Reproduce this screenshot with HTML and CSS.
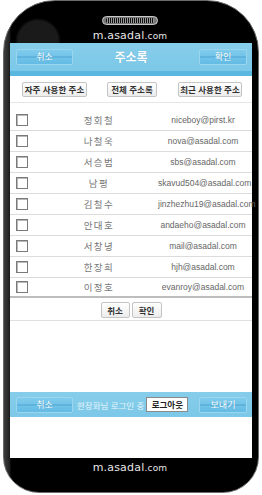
FILE: index.html
```html
<!DOCTYPE html>
<html lang="ko">
<head>
<meta charset="utf-8">
<title>주소록</title>
<link rel="stylesheet" href="styles.css">
</head>
<body>
<div class="phone">
  <div class="phone-top">
    <div class="speaker"><div class="grille"></div></div>
    <div class="brand">m.asadal<span class="dot">.com</span></div>
  </div>
  <div class="screen">
    <div class="bar header">
      <span class="bbtn bbtn-l">취소</span>
      <span class="title">주소록</span>
      <span class="bbtn bbtn-r">확인</span>
    </div>
    <div class="tabs">
      <span class="gbtn tab1">자주 사용한 주소</span>
      <span class="gbtn tab2">전체 주소록</span>
      <span class="gbtn tab3">최근 사용한 주소</span>
    </div>
    <div class="list">
      <div class="row"><span class="cb"></span><span class="name">정회철</span><span class="mail">niceboy@pirst.kr</span></div>
      <div class="row"><span class="cb"></span><span class="name">나철욱</span><span class="mail">nova@asadal.com</span></div>
      <div class="row"><span class="cb"></span><span class="name">서승범</span><span class="mail">sbs@asadal.com</span></div>
      <div class="row"><span class="cb"></span><span class="name">남평</span><span class="mail">skavud504@asadal.com</span></div>
      <div class="row"><span class="cb"></span><span class="name">김철수</span><span class="mail">jinzhezhu19@asadal.com</span></div>
      <div class="row"><span class="cb"></span><span class="name">안대호</span><span class="mail">andaeho@asadal.com</span></div>
      <div class="row"><span class="cb"></span><span class="name">서창녕</span><span class="mail">mail@asadal.com</span></div>
      <div class="row"><span class="cb"></span><span class="name">한장희</span><span class="mail">hjh@asadal.com</span></div>
      <div class="row last"><span class="cb"></span><span class="name">이정호</span><span class="mail">evanroy@asadal.com</span></div>
    </div>
    <div class="actions">
      <span class="gbtn act1">취소</span>
      <span class="gbtn act2">확인</span>
    </div>
    <div class="spacer"></div>
    <div class="bar footer">
      <span class="bbtn bbtn-l">취소</span>
      <span class="status">한장화님 로그인 중</span>
      <span class="logout">로그아웃</span>
      <span class="bbtn bbtn-r">보내기</span>
    </div>
    <div class="bottom-space"></div>
  </div>
  <div class="phone-bottom">
    <div class="brand">m.asadal<span class="dot">.com</span></div>
  </div>
</div>
</body>
</html>
```

FILE: styles.css
```css
html, body {
  margin: 0;
  padding: 0;
  background: #fff;
}
body {
  font-family: "Noto Sans CJK KR", "Noto Sans", sans-serif;
}
.phone {
  box-sizing: border-box;
  width: 256px;
  height: 493px;
  margin-left: 3px;
  border: 1px solid #6a6a6a;
  border-radius: 52px 52px 36px 36px;
  background:
    radial-gradient(circle at 34px 40px, rgba(255,255,255,0.10) 0 20px, rgba(255,255,255,0) 23px),
    linear-gradient(to right, #3c3c3c 0, #2a2a2a 4px, #1a1a1a 6px, #000 7px);
  display: flex;
  flex-direction: column;
  align-items: flex-start;
  overflow: hidden;
}
.phone-top {
  width: 100%;
  height: 42px;
  display: flex;
  flex-direction: column;
  align-items: center;
}
.speaker {
  margin-top: 15px;
  width: 56px;
  height: 9px;
  box-sizing: border-box;
  border: 1px solid #c8c8c8;
  border-radius: 5px;
  background: #777;
  padding: 1px 3px;
  margin-left: -2px;
}
.grille {
  height: 100%;
  background: repeating-linear-gradient(90deg, #111 0 1px, #999 1px 2px);
  border-radius: 2px;
}
.brand {
  margin-top: 4px;
  font-family: "DejaVu Sans", sans-serif;
  font-size: 11px;
  line-height: 13px;
  color: #e6e6e6;
  letter-spacing: 0.2px;
  margin-left: -2px;
}
.brand .dot {
  font-size: 9px;
}
.screen {
  width: 242px;
  height: 415px;
  margin-left: 6px;
  background: #fff;
  display: flex;
  flex-direction: column;
}
.bar {
  display: flex;
  align-items: center;
  background: linear-gradient(#86cdea, #7cc8e8);
  padding: 0 5px 0 6px;
}
.header {
  height: 28px;
  border-bottom: 5px solid #5ab8e0;
  position: relative;
}
.bbtn {
  box-sizing: border-box;
  height: 16px;
  border: 1px solid #9bd6ef;
  border-radius: 2px;
  background:
    linear-gradient(rgba(255,255,255,0) 0 6px, rgba(60,150,200,0.35) 6px 8px, rgba(255,255,255,0) 8px),
    linear-gradient(#7fcbec, #64bbe4);
  color: #fff;
  font-size: 9px;
  line-height: 14px;
  text-align: center;
  text-shadow: 0 0 1px #4a9fc8;
}
.bbtn-l { width: 57px; }
.bbtn-r { width: 48px; margin-left: auto; }
.title {
  position: absolute;
  left: 0;
  right: 0;
  top: 0;
  text-align: center;
  font-size: 12px;
  font-weight: bold;
  line-height: 28px;
  color: #fff;
  text-shadow: 0 0 1px #5aa8cc;
  pointer-events: none;
}
.tabs {
  height: 26px;
  border-bottom: 1px solid #e6e6e6;
  display: flex;
  align-items: flex-start;
  padding-top: 6px;
  box-sizing: border-box;
  height: 27px;
}
.gbtn {
  box-sizing: border-box;
  height: 15px;
  border: 1px solid #c4c4c4;
  border-radius: 2px;
  background: linear-gradient(#ffffff, #ececec);
  color: #333;
  font-size: 8.5px;
  font-weight: bold;
  line-height: 13px;
  text-align: center;
}
.tab1 { width: 65px; margin-left: 12px; }
.tab2 { width: 50px; margin-left: 20px; }
.tab3 { width: 64px; margin-left: 21px; }
.list {
  padding-top: 7px;
}
.row {
  display: grid;
  grid-template-columns: 30px 118px 90px;
  align-items: center;
  height: 21px;
  box-sizing: border-box;
  border-bottom: 1px solid #dcdcdc;
}
.row.last {
  border-bottom: 2px solid #bdbdbd;
  height: 20px;
}
.cb {
  box-sizing: border-box;
  width: 12px;
  height: 12px;
  margin-left: 6px;
  border: 1px solid #7a7a7a;
  box-shadow: inset 1px 1px 0 #b8b8b8;
  background: #fff;
}
.name {
  text-align: center;
  font-size: 9.5px;
  letter-spacing: 1.5px;
  color: #777;
}
.mail {
  text-align: center;
  font-family: "Liberation Sans", Arial, sans-serif;
  font-size: 8.5px;
  color: #666;
  white-space: nowrap;
}
.actions {
  display: flex;
  justify-content: center;
  gap: 2px;
  padding: 4px 0 2px;
  border-bottom: 1px solid #e0e0e0;
}
.act1 { width: 29px; height: 16px; line-height: 14px; }
.act2 { width: 30px; height: 16px; line-height: 14px; }
.spacer {
  height: 71px;
}
.footer {
  height: 25px;
}
.status {
  margin-left: 4px;
  font-size: 8.5px;
  color: #e8f6fc;
  white-space: nowrap;
}
.logout {
  box-sizing: border-box;
  margin-left: 2px;
  width: 42px;
  height: 15px;
  background: #fff;
  border: 1px solid #8a8a8a;
  color: #222;
  font-size: 8.5px;
  font-weight: bold;
  line-height: 13px;
  text-align: center;
}
.bottom-space {
  flex: 1;
}
.phone-bottom {
  width: 100%;
  display: flex;
  justify-content: center;
}
.phone-bottom .brand {
  margin-top: 3px;
}
```
